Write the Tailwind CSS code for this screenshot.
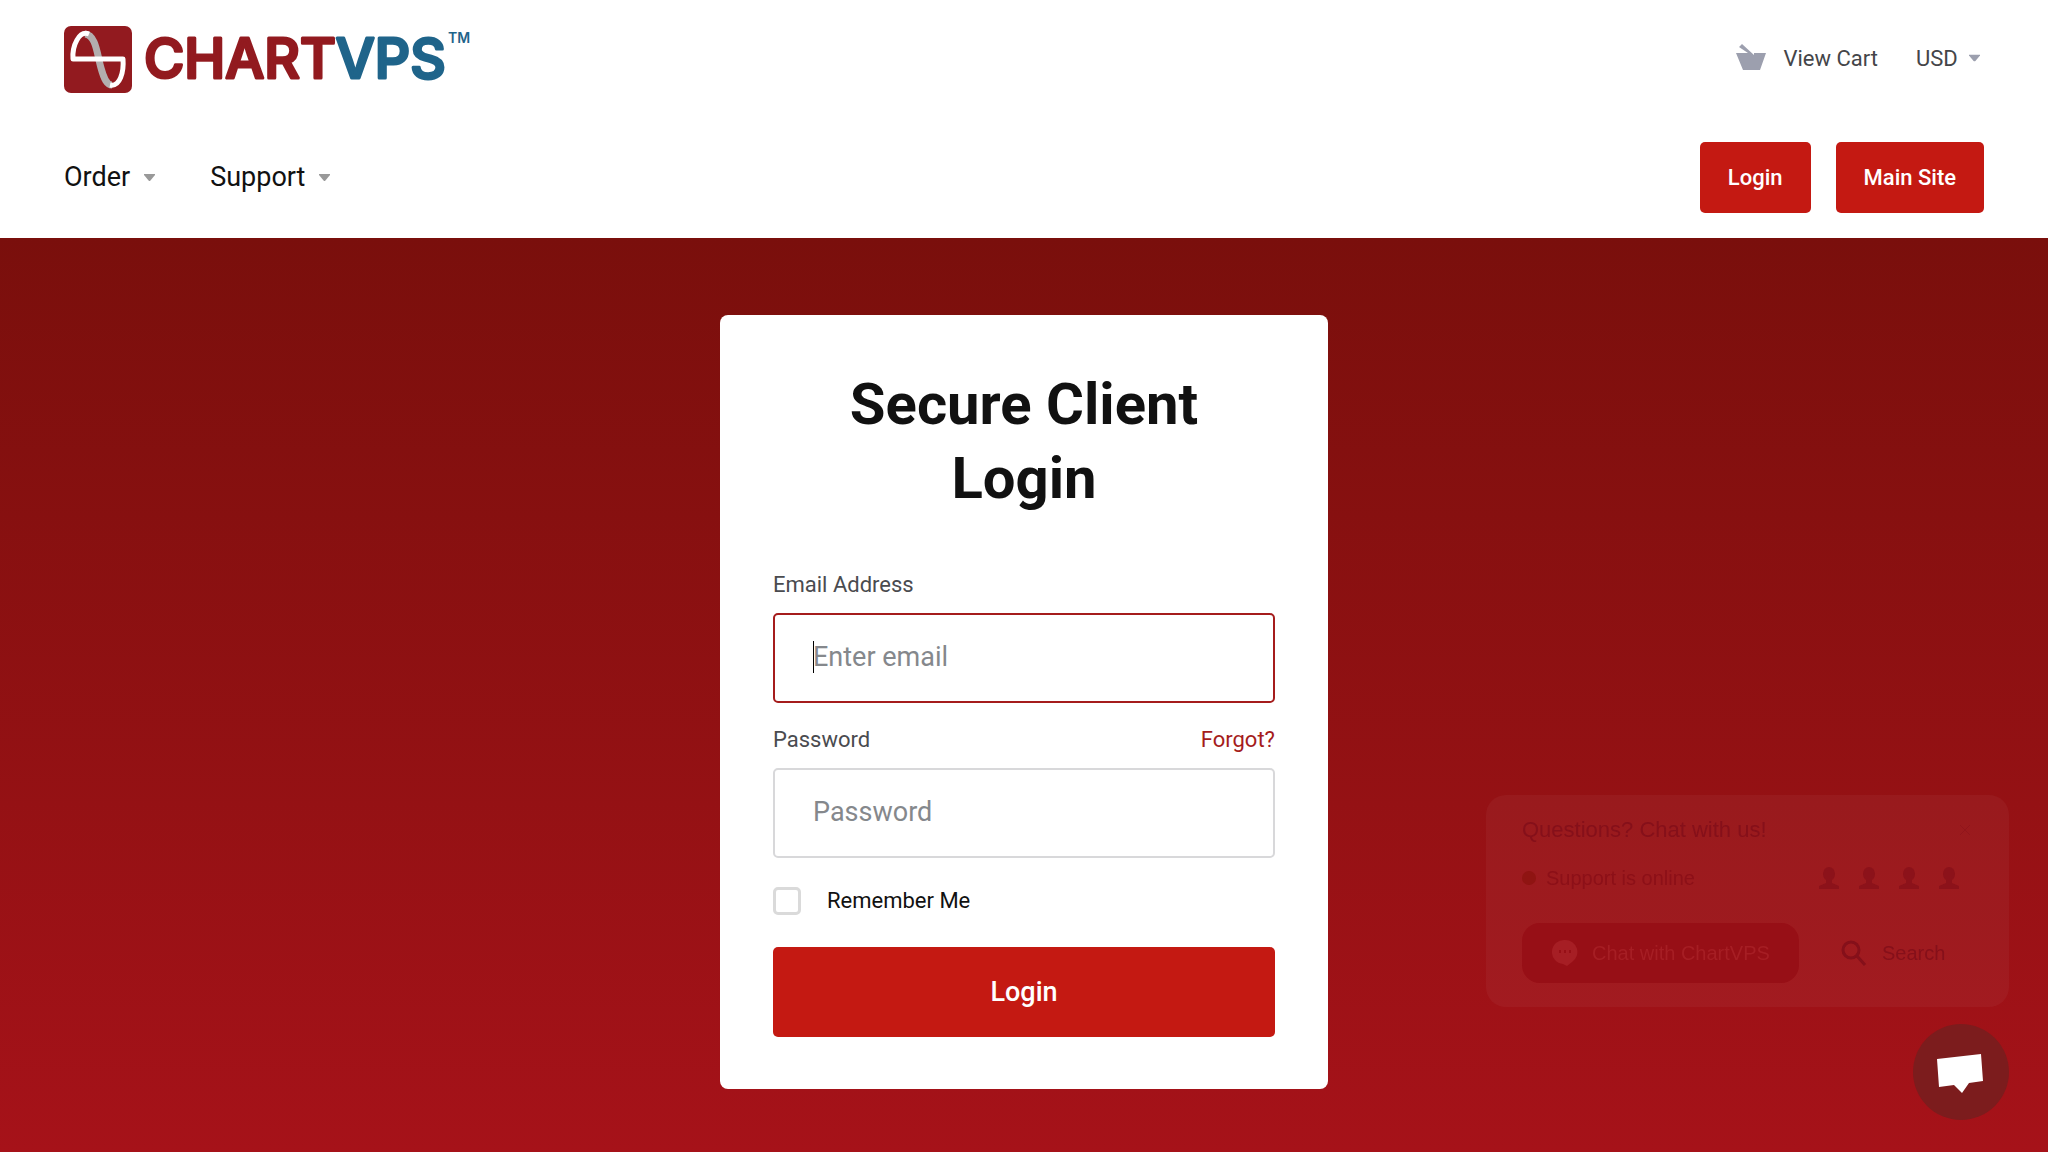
<!DOCTYPE html>
<html lang="en">
  <head>
    <meta charset="UTF-8" />
    <meta name="viewport" content="width=device-width, initial-scale=1.0" />
    <title>Secure Client Login - ChartVPS</title>
    <script src="https://cdn.jsdelivr.net/npm/@tailwindcss/browser@4"></script>
  </head>
  <body class="min-h-screen flex flex-col bg-white font-[Roboto,sans-serif] text-[#111]">
    <!-- Header -->
    <header class="px-16 pt-6 pb-[25px]">
      <div class="flex items-center justify-between">
        <a href="#" aria-label="ChartVPS home">
          <svg class="block w-[408px] h-[70px]" viewBox="0 0 408 70">
            <rect x="0" y="2" width="68" height="67" rx="7" fill="#921a1f" />
            <path d="M21 10C32 11 33 30 37 44C40 55 43 61 48 61" fill="none" stroke="#b3aeae" stroke-width="7" />
            <path d="M25 10C15 6 8 22 9 35H59C60 48 56 63 46 61" fill="none" stroke="#fff" stroke-width="5" stroke-linejoin="round" />
            <text x="80" y="54" font-family="Inter, sans-serif" font-size="55" font-weight="500" stroke-width="3" stroke-linejoin="round"><tspan fill="#921a1f" stroke="#921a1f">CHART</tspan><tspan fill="#1f648a" stroke="#1f648a">VPS</tspan></text>
            <text x="384" y="19" font-family="Inter, sans-serif" font-size="14" font-weight="600" fill="#1f648a">TM</text>
          </svg>
        </a>
        <div class="flex items-center gap-[38px] pb-[2px] text-[22px] text-[#444549]">
          <a href="#" class="flex items-center gap-[18px]">
            <svg class="w-[30px] h-[28px]" viewBox="0 0 30 28" fill="#9c9fae">
              <path d="M0 9H12L3 3L6 0L18 11V9H30L24 26H7Z" />
            </svg>
            View Cart
          </a>
          <div class="relative">
            <select aria-label="Currency" class="appearance-none pr-[26px] bg-transparent outline-none">
              <option>USD</option>
            </select>
            <svg class="absolute right-1 top-1/2 -translate-y-1/2 w-[11px] h-[7px] pointer-events-none" viewBox="0 0 11 7" fill="#9c9fae">
              <path d="M0 0H11V1L6 7H5L0 1Z" />
            </svg>
          </div>
        </div>
      </div>

      <div class="mt-12 flex items-center justify-between">
        <nav class="flex gap-[55px] text-[27px]">
          <button type="button" class="flex items-center gap-[14px]">
            Order
            <svg class="w-[11px] h-[7px]" viewBox="0 0 11 7" fill="#999"><path d="M0 0H11V1L6 7H5L0 1Z" /></svg>
          </button>
          <button type="button" class="flex items-center gap-[14px]">
            Support
            <svg class="w-[11px] h-[7px]" viewBox="0 0 11 7" fill="#999"><path d="M0 0H11V1L6 7H5L0 1Z" /></svg>
          </button>
        </nav>
        <div class="flex gap-[25px] text-[22px] leading-[71px] font-medium text-white">
          <a href="#" class="px-7 rounded-[5px] bg-[#c41912]">Login</a>
          <a href="#" class="px-7 rounded-[5px] bg-[#c41912]">Main Site</a>
        </div>
      </div>
    </header>

    <!-- Login -->
    <main class="grow flex justify-center items-start pt-[77px] pb-[63px] bg-linear-to-b from-[#7a0f0c] to-[#a61219]">
      <form class="w-[608px] px-[53px] py-[52px] rounded-lg bg-white">
        <h1 class="mb-[53px] text-[58px] leading-[74px] font-bold text-center">Secure Client Login</h1>

        <label for="email" class="block mb-3 text-[22px] leading-[33px] text-[#4a4b4f]">Email Address</label>
        <div class="relative mb-5">
          <input
            type="email"
            id="email"
            placeholder="Enter email"
            class="block w-full h-[90px] px-[38px] pb-[2px] border-2 border-[#a51c1c] rounded-[5px] text-[27px] outline-none placeholder:text-[#85888c]"
          />
          <!-- Text cursor -->
          <span class="absolute left-10 top-7 w-px h-8 bg-black"></span>
        </div>

        <div class="flex justify-between mb-3 text-[22px] leading-[33px]">
          <label for="password" class="text-[#4a4b4f]">Password</label>
          <a href="#" class="text-[#a51c1c]">Forgot?</a>
        </div>
        <input
          type="password"
          id="password"
          placeholder="Password"
          class="block w-full h-[90px] px-[38px] pb-[2px] border-2 border-[#d8d8da] rounded-[5px] text-[27px] outline-none placeholder:text-[#85888c]"
        />

        <div class="flex items-center gap-[26px] mt-[26px] mb-[30px] text-[22px] leading-[33px]">
          <input type="checkbox" id="remember" class="appearance-none w-7 h-7 border-[3px] border-[#dadada] rounded-[5px]" />
          <label for="remember">Remember Me</label>
        </div>

        <button type="submit" class="block w-full h-[90px] rounded-[5px] bg-[#c41912] text-[27px] font-medium text-white">Login</button>
      </form>
    </main>

    <!-- Chat widget -->
    <div class="fixed right-[39px] bottom-8 flex flex-col items-end gap-[17px] font-['Liberation_Sans',sans-serif]">
      <div class="w-[523px] h-[212px] px-9 pt-[23px] rounded-[20px] bg-white/4 text-[#85101a]">
        <div class="flex items-center justify-between pr-[2px] text-[22px] leading-6">
          <p>Questions? Chat with us!</p>
          <button type="button" aria-label="Close" class="opacity-40">
            <svg class="w-3 h-3" viewBox="0 0 12 12" stroke="currentColor" stroke-width="1"><path d="M1 1L11 11M11 1L1 11" /></svg>
          </button>
        </div>
        <div class="flex items-center justify-between mt-6 pr-[14px] text-xl leading-6">
          <p class="flex items-center gap-[10px] text-[#8c1018]">
            <span class="w-[14px] h-[14px] rounded-full bg-[#8f1412]"></span>
            Support is online
          </p>
          <div class="flex gap-5 text-[#8c121a]">
            <svg class="w-5 h-6" viewBox="0 0 20 24" fill="currentColor"><ellipse cx="10" cy="8" rx="6" ry="7" /><path d="M7 13H13V17L20 20V23H0V20L7 17Z" /></svg>
            <svg class="w-5 h-6" viewBox="0 0 20 24" fill="currentColor"><ellipse cx="10" cy="8" rx="6" ry="7" /><path d="M7 13H13V17L20 20V23H0V20L7 17Z" /></svg>
            <svg class="w-5 h-6" viewBox="0 0 20 24" fill="currentColor"><ellipse cx="10" cy="8" rx="6" ry="7" /><path d="M7 13H13V17L20 20V23H0V20L7 17Z" /></svg>
            <svg class="w-5 h-6" viewBox="0 0 20 24" fill="currentColor"><ellipse cx="10" cy="8" rx="6" ry="7" /><path d="M7 13H13V17L20 20V23H0V20L7 17Z" /></svg>
          </div>
        </div>
        <div class="flex mt-[33px] text-xl">
          <button type="button" class="flex items-center gap-[14px] w-[277px] h-[60px] pl-[30px] rounded-[18px] bg-[#970f16] text-[#a61e24]">
            <svg class="w-[26px] h-7" viewBox="0 0 26 28"><path d="M13 1A12 12 0 0 1 20 23L15 27L11 25A12 12 0 0 1 13 1Z" fill="#a61e24" /><path d="M8 11V14M13 11V14M18 11V14" stroke="#970f16" stroke-width="2" /></svg>
            Chat with ChartVPS
          </button>
          <button type="button" class="flex items-center gap-[15px] h-[60px] pl-[42px]">
            <svg class="w-[26px] h-[26px]" viewBox="0 0 26 26" fill="none" stroke="currentColor" stroke-width="3"><circle cx="10" cy="10" r="8" /><path d="M16 16L24 25" /></svg>
            Search
          </button>
        </div>
      </div>
      <button type="button" aria-label="Open chat" class="w-24 h-24 rounded-full bg-[#7c1c1d]">
        <svg class="w-24 h-24" viewBox="0 0 96 96" fill="#fff"><path d="M24 35L68 30L70 57L56 59L49 69L41 61L26 63Z" /></svg>
      </button>
    </div>
  </body>
</html>
